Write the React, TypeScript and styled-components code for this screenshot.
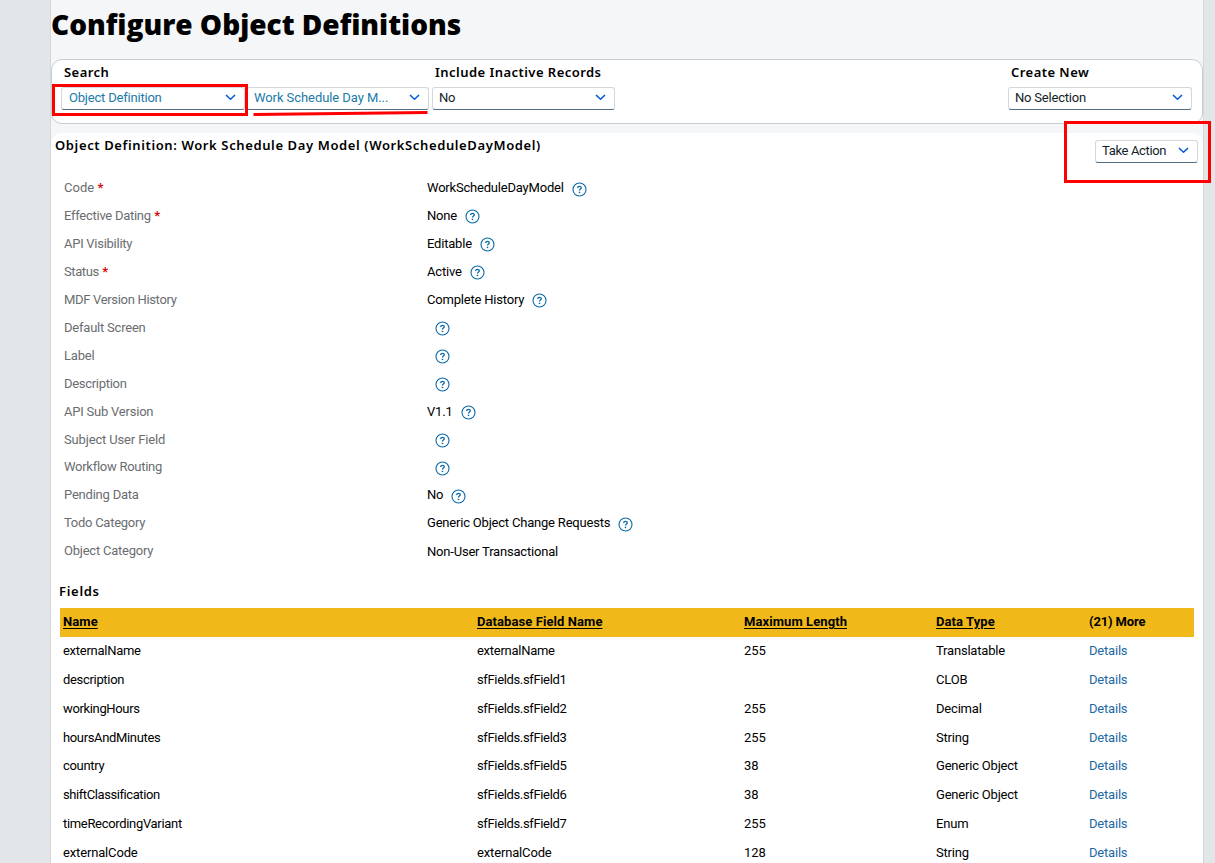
import React from 'react';
import styled, { createGlobalStyle } from 'styled-components';

const GlobalStyle = createGlobalStyle`
  * { box-sizing: border-box; }
  body {
    margin: 0;
    background: #e2e6e9;
    font-family: Roboto, "Noto Sans", sans-serif;
    font-size: 13px;
    color: #000;
    overflow: hidden;
  }
`;

const headingFont = '"Noto Sans", "Open Sans", sans-serif';

const Page = styled.div`
  position: relative;
  width: 1215px;
  height: 863px;
  overflow: hidden;
  padding: 0 11px 0 50px;
`;

const Content = styled.main`
  height: 863px;
  display: flex;
  flex-direction: column;
  background: #f5f6f7;
  border-left: 1px solid #d3d8dc;
  border-right: 1px solid #d3d8dc;
`;

const Title = styled.h1`
  margin: 0;
  height: 59px;
  flex: none;
  padding-top: 5px;
  font-family: "Open Sans", sans-serif;
  font-size: 28px;
  line-height: 38px;
  font-weight: 800;
  letter-spacing: 0;
  white-space: nowrap;
`;

const SearchPanel = styled.section`
  height: 65px;
  flex: none;
  display: flex;
  padding: 3px 10px 0 9px;
  background: #fff;
  border: 1px solid #c5ced4;
  border-radius: 11px;
`;

const Group = styled.div<{ $end?: boolean }>`
  margin-left: ${(p) => (p.$end ? 'auto' : '0')};
  & + & { padding-left: 3px; }
`;

const GroupLabel = styled.div`
  height: 24px;
  padding-left: 3px;
  font-family: ${headingFont};
  line-height: 18px;
  font-weight: 600;
  letter-spacing: 0.46px;
  white-space: nowrap;
`;

const Selects = styled.div`
  display: flex;
  gap: 1px;
`;

const SelectBox = styled.div<{ $width: number; $link?: boolean; $spacing?: number }>`
  width: ${(p) => p.$width}px;
  height: 23px;
  display: flex;
  align-items: center;
  justify-content: space-between;
  padding: 0 8px 2px ${(p) => (p.$link ? 7 : 6)}px;
  border: 1px solid #d3d8dd;
  border-bottom-color: #556b82;
  border-radius: 3px;
  background: #fff;
  color: ${(p) => (p.$link ? '#1a7aa8' : '#131e29')};
  letter-spacing: ${(p) => p.$spacing ?? -0.2}px;
  line-height: 15px;
  white-space: nowrap;
`;

const Details = styled.section`
  flex: 1;
  margin-top: 9px;
  background: #fff;
  border-radius: 11px 11px 0 0;
`;

const DetailsHeader = styled.header`
  height: 41.26px;
  display: flex;
  justify-content: space-between;
  padding: 7px 5px 0 4px;
`;

const DetailsTitle = styled.h2`
  margin: -4px 0 0;
  font-family: ${headingFont};
  font-size: 13px;
  line-height: 18px;
  font-weight: 600;
  letter-spacing: 0.62px;
`;

const Properties = styled.dl`
  margin: 0;
  padding-left: 13px;
`;

const Property = styled.div`
  height: 27.93px;
  display: grid;
  grid-template-columns: 363px 1fr;
  line-height: 28px;
  letter-spacing: -0.2px;
  white-space: nowrap;
`;

const PropertyName = styled.dt<{ $spacing?: number }>`
  color: #6a6d70;
  letter-spacing: ${(p) => p.$spacing ?? -0.22}px;
`;

const Required = styled.span`
  margin-left: 3.5px;
  color: #d20a0a;
  font-weight: 700;
`;

const PropertyValue = styled.dd<{ $empty: boolean; $last?: boolean }>`
  margin: 0;
  display: flex;
  align-items: center;
  gap: 8px;
  padding-left: ${(p) => (p.$empty ? 8 : 0)}px;
  padding-top: ${(p) => (p.$last ? 1 : 0)}px;
`;

const FieldsTitle = styled.h3`
  margin: 0;
  padding: 17px 0 0 8px;
  height: 42.74px;
  font-family: ${headingFont};
  font-size: 13px;
  line-height: 18px;
  font-weight: 600;
  letter-spacing: 0.7px;
`;

const Table = styled.div`
  margin: 0 9px;
`;

const Row = styled.div<{ $head?: boolean }>`
  display: grid;
  grid-template-columns: 414px 267px 192px 153px 1fr;
  height: ${(p) => (p.$head ? 29.15 : 28.85)}px;
  padding-left: 3px;
  line-height: ${(p) => (p.$head ? 27 : 28)}px;
  background: ${(p) => (p.$head ? '#f0b919' : 'transparent')};
  font-weight: ${(p) => (p.$head ? 700 : 400)};
  letter-spacing: ${(p) => (p.$head ? 0.08 : -0.2)}px;
  white-space: nowrap;
`;

const Cell = styled.span<{ $spacing?: number }>`
  letter-spacing: ${(p) => (p.$spacing === undefined ? 'inherit' : `${p.$spacing}px`)};
`;

const SortLink = styled.span`
  text-decoration: underline;
  text-underline-offset: 2px;
`;

const DetailsLink = styled.span`
  color: #1c6aa5;
`;

const Highlight = styled.div<{ $x: number; $y: number; $w: number; $h: number }>`
  position: absolute;
  left: ${(p) => p.$x}px;
  top: ${(p) => p.$y}px;
  width: ${(p) => p.$w}px;
  height: ${(p) => p.$h}px;
  border: 3px solid #fe0000;
`;

const Stroke = styled.svg`
  position: absolute;
  left: 253px;
  top: 109px;
`;

const Chevron = () => (
  <svg width="11" height="7" viewBox="0 0 11 7" fill="none">
    <path d="M1.4 1.4 5.5 5.2 9.6 1.4" stroke="#0a5fd8" strokeWidth="1.5" strokeLinecap="round" strokeLinejoin="round" />
  </svg>
);

const HelpSvg = styled.svg`
  display: block;
  margin-top: 1.5px;
`;

const Help = () => (
  <HelpSvg width="15" height="15" viewBox="0 0 15 15" fill="none" stroke="#0a6aa8">
    <circle cx="7.5" cy="7.5" r="6.5" strokeWidth="1.1" />
    <path d="M5.7 6C5.7 4.8 6.5 4.3 7.5 4.3S9.3 4.9 9.3 5.8C9.3 7.1 7.5 7 7.5 8.5" strokeWidth="1.3" />
    <path d="M7.5 9.7v1.4" strokeWidth="1.5" />
  </HelpSvg>
);

const Select = ({ text, width, link, spacing }: { text: string; width: number; link?: boolean; spacing?: number }) => (
  <SelectBox $width={width} $link={link} $spacing={spacing}>
    {text}
    <Chevron />
  </SelectBox>
);

type Prop = { name: string; value?: string; required?: boolean; noHelp?: boolean; spacing?: number };

const properties: Prop[] = [
  { name: 'Code', value: 'WorkScheduleDayModel', required: true, spacing: 0 },
  { name: 'Effective Dating', value: 'None', required: true, spacing: -0.27 },
  { name: 'API Visibility', value: 'Editable', spacing: -0.27 },
  { name: 'Status', value: 'Active', required: true, spacing: -0.4 },
  { name: 'MDF Version History', value: 'Complete History', spacing: -0.32 },
  { name: 'Default Screen' },
  { name: 'Label' },
  { name: 'Description', spacing: -0.3 },
  { name: 'API Sub Version', value: 'V1.1' },
  { name: 'Subject User Field', spacing: -0.15 },
  { name: 'Workflow Routing', spacing: -0.27 },
  { name: 'Pending Data', value: 'No' },
  { name: 'Todo Category', value: 'Generic Object Change Requests', spacing: -0.27 },
  { name: 'Object Category', value: 'Non-User Transactional', noHelp: true },
];

type Field = { name: string; column: string; length: string; type: string; spacing: number };

const fields: Field[] = [
  { name: 'externalName', column: 'externalName', length: '255', type: 'Translatable', spacing: -0.27 },
  { name: 'description', column: 'sfFields.sfField1', length: '', type: 'CLOB', spacing: -0.32 },
  { name: 'workingHours', column: 'sfFields.sfField2', length: '255', type: 'Decimal', spacing: -0.35 },
  { name: 'hoursAndMinutes', column: 'sfFields.sfField3', length: '255', type: 'String', spacing: -0.35 },
  { name: 'country', column: 'sfFields.sfField5', length: '38', type: 'Generic Object', spacing: -0.3 },
  { name: 'shiftClassification', column: 'sfFields.sfField6', length: '38', type: 'Generic Object', spacing: -0.42 },
  { name: 'timeRecordingVariant', column: 'sfFields.sfField7', length: '255', type: 'Enum', spacing: -0.32 },
  { name: 'externalCode', column: 'externalCode', length: '128', type: 'String', spacing: -0.15 },
];

export default function App() {
  return (
    <Page>
      <GlobalStyle />
      <Content>
        <Title>Configure Object Definitions</Title>
        <SearchPanel>
          <Group>
            <GroupLabel>Search</GroupLabel>
            <Selects>
              <Select text="Object Definition" width={184} link />
              <Select text="Work Schedule Day M..." width={183} link spacing={-0.07} />
            </Selects>
          </Group>
          <Group>
            <GroupLabel>Include Inactive Records</GroupLabel>
            <Select text="No" width={183} />
          </Group>
          <Group $end>
            <GroupLabel>Create New</GroupLabel>
            <Select text="No Selection" width={184} />
          </Group>
        </SearchPanel>
        <Details>
          <DetailsHeader>
            <DetailsTitle>Object Definition: Work Schedule Day Model (WorkScheduleDayModel)</DetailsTitle>
            <Select text="Take Action" width={103} spacing={-0.35} />
          </DetailsHeader>
          <Properties>
            {properties.map((p) => (
              <Property key={p.name}>
                <PropertyName $spacing={p.spacing}>
                  {p.name}
                  {p.required && <Required>*</Required>}
                </PropertyName>
                <PropertyValue $empty={!p.value} $last={p.noHelp}>
                  {p.value && <span>{p.value}</span>}
                  {!p.noHelp && <Help />}
                </PropertyValue>
              </Property>
            ))}
          </Properties>
          <FieldsTitle>Fields</FieldsTitle>
          <Table>
            <Row $head>
              <span><SortLink>Name</SortLink></span>
              <span><SortLink>Database Field Name</SortLink></span>
              <span><SortLink>Maximum Length</SortLink></span>
              <span><SortLink>Data Type</SortLink></span>
              <Cell $spacing={-0.15}>(21) More</Cell>
            </Row>
            {fields.map((f) => (
              <Row key={f.name}>
                <Cell $spacing={f.spacing}>{f.name}</Cell>
                <Cell $spacing={f.column === f.name ? f.spacing : -0.35}>{f.column}</Cell>
                <Cell $spacing={-0.1}>{f.length}</Cell>
                <Cell>{f.type}</Cell>
                <DetailsLink>Details</DetailsLink>
              </Row>
            ))}
          </Table>
        </Details>
      </Content>
      <Highlight $x={52} $y={84} $w={196} $h={32} />
      <Highlight $x={1064} $y={121} $w={147} $h={62} />
      <Stroke width="176" height="8" viewBox="0 0 176 8">
        <path d="M.5 5.5 174.5 3.5" stroke="#fe0000" strokeWidth="3" fill="none" />
      </Stroke>
    </Page>
  );
}
